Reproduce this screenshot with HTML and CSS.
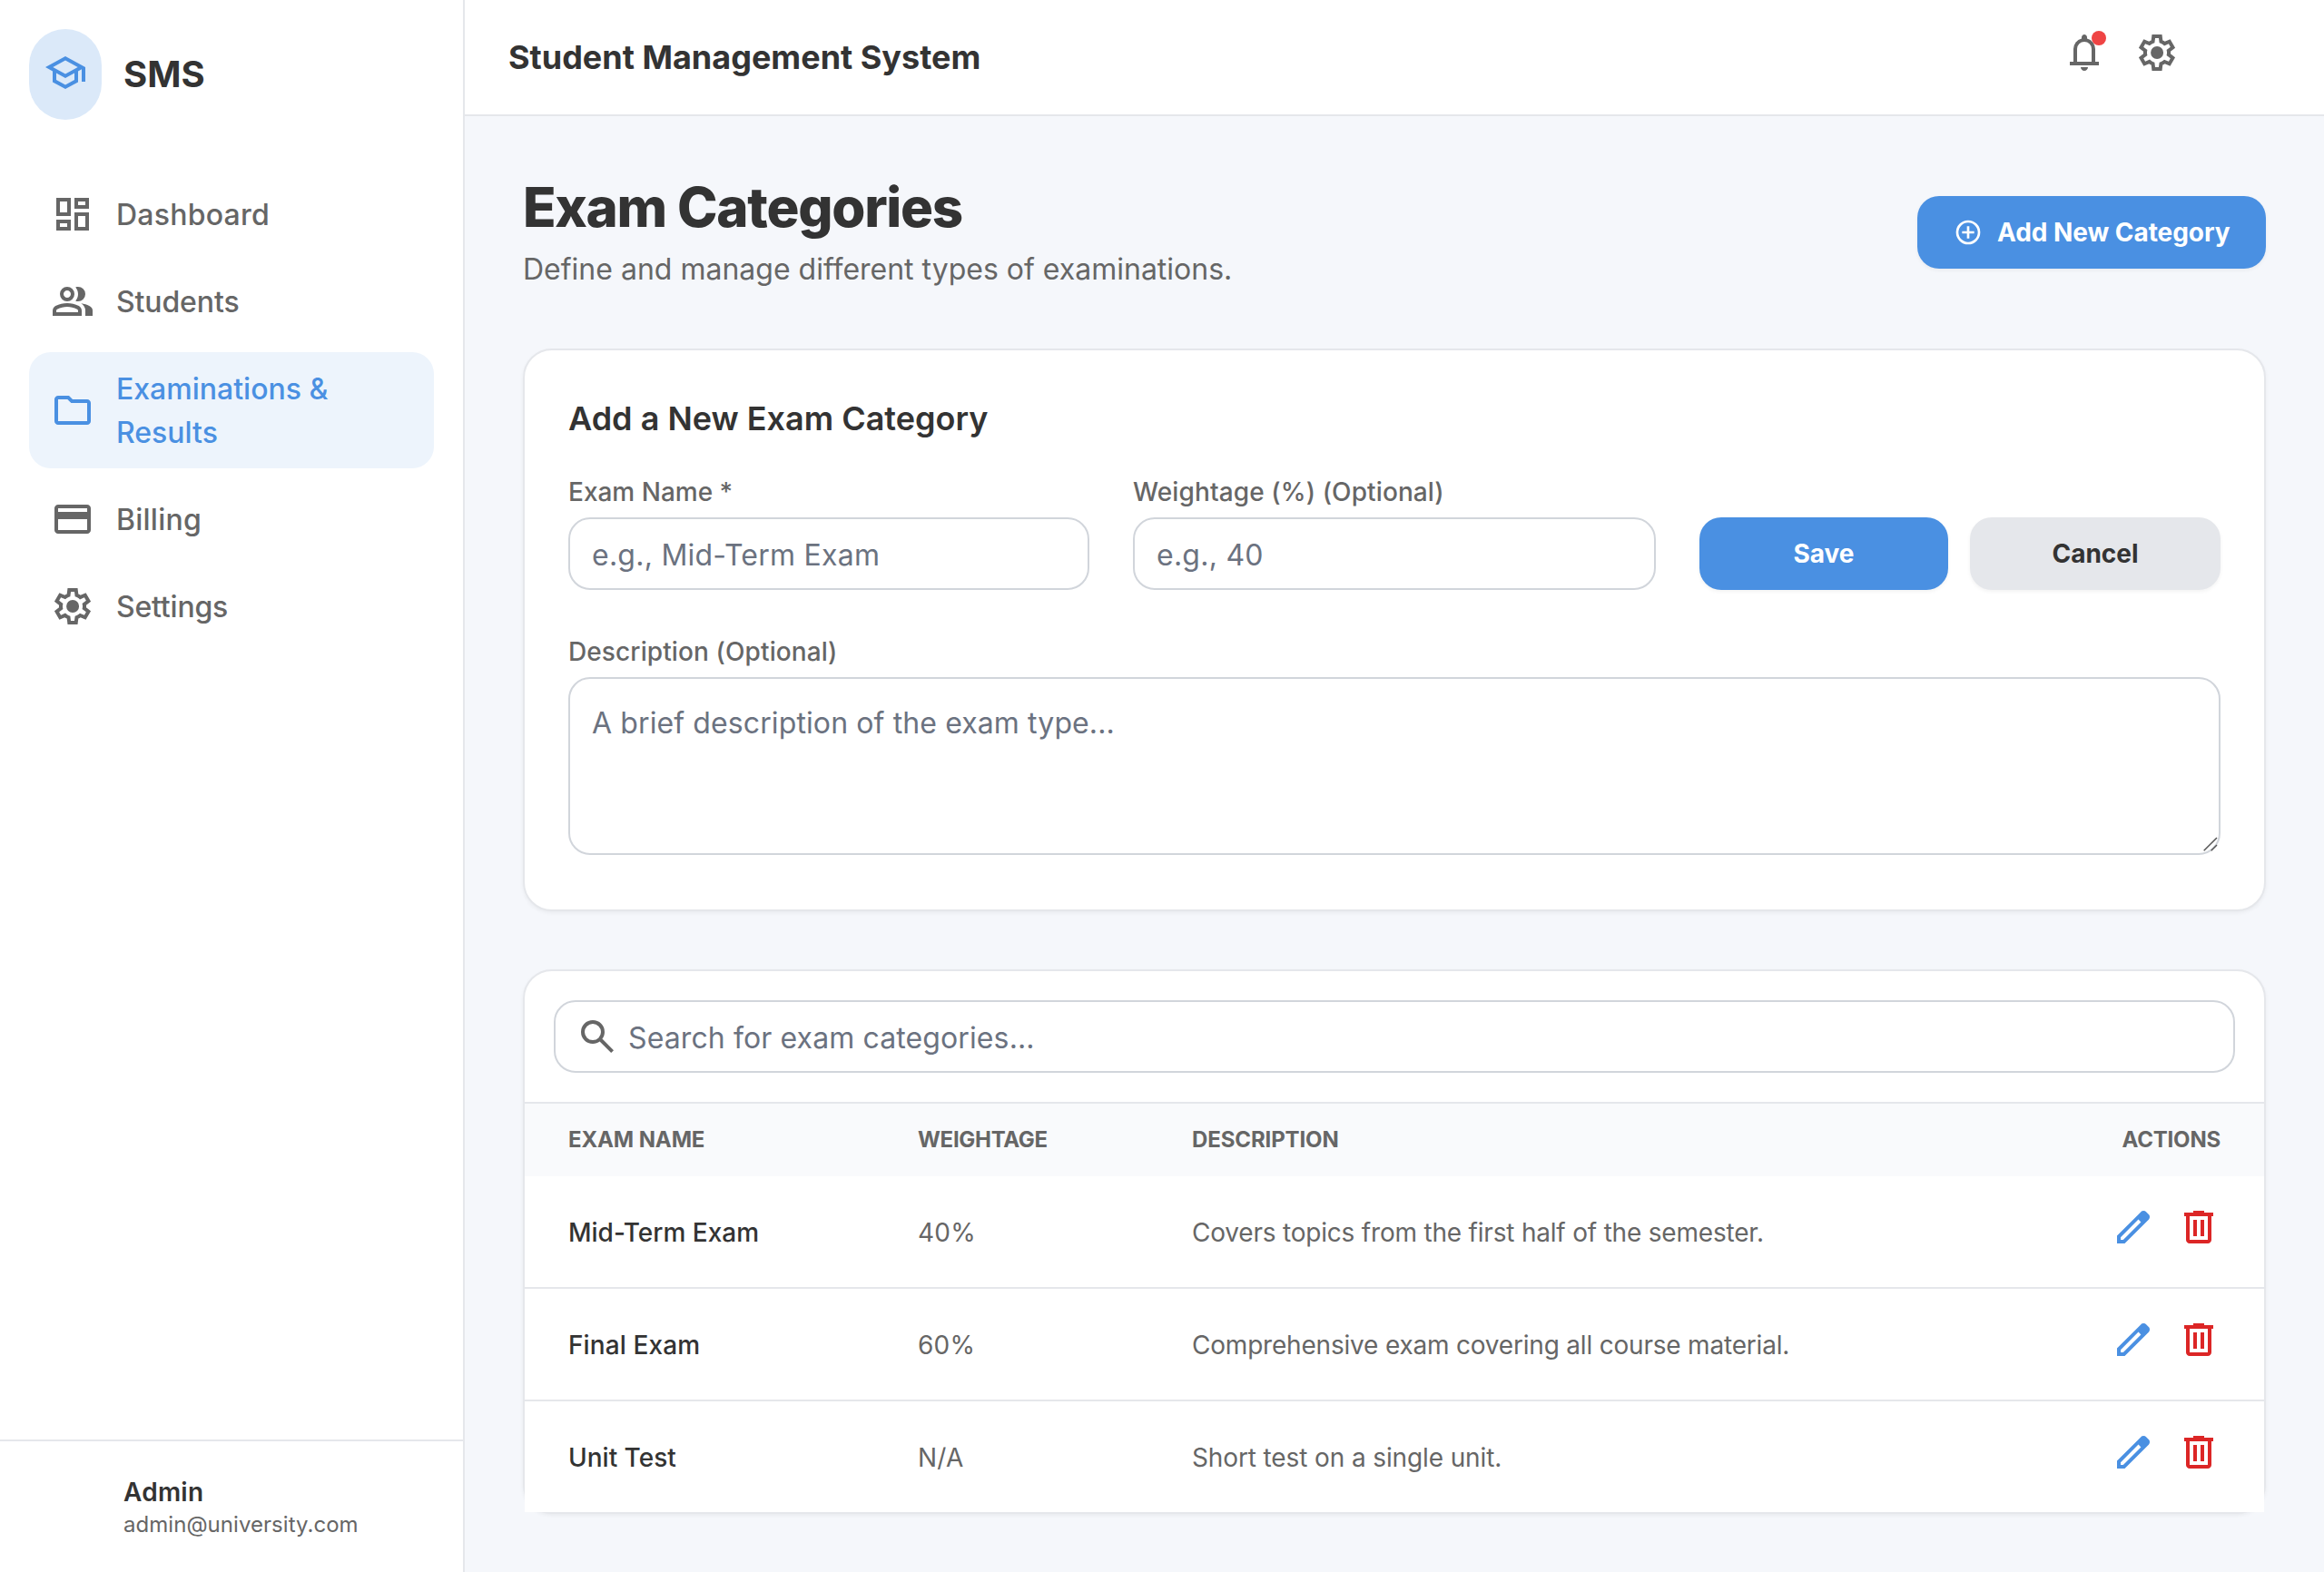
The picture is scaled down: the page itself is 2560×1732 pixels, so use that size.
FILE: index.html
```html
<!DOCTYPE html>
<html lang="en">
<head>
<meta charset="utf-8">
<title>Student Management System</title>
<link rel="stylesheet" href="styles.css">
</head>
<body>
<svg class="sprite" width="0" height="0" aria-hidden="true">
  <symbol id="i-school" viewBox="0 0 24 24"><path d="M12 21l-7-3.8v-6L1 9l11-6 11 6v8h-2v-6.9l-2 1.1v6zm0-8.3L18.85 9 12 5.3 5.15 9zm0 6.025 5-2.7V12.25L12 15l-5-2.75v3.775z"/></symbol>
  <symbol id="i-dashboard" viewBox="0 0 24 24"><path fill-rule="evenodd" d="M13 9V3h8v6zM3 13V3h8v10zm10 8V11h8v10zM3 21v-6h8v6zm2-10h4V5H5zm10 8h4v-6h-4zm0-12h4V5h-4zM5 19h4v-2H5z"/></symbol>
  <symbol id="i-group" viewBox="0 0 24 24"><path fill-rule="evenodd" d="M1 20v-2.8q0-.85.438-1.562T2.6 14.55q1.55-.775 3.15-1.162T9 13t3.25.388t3.15 1.162q.725.375 1.163 1.088T17 17.2V20zm18 0v-3q0-1.1-.612-2.113T16.65 13.15q1.275.15 2.4.513t2.1.887q.9.5 1.375 1.112T23 17v3zM9 12q-1.65 0-2.825-1.175T5 8t1.175-2.825T9 4t2.825 1.175T13 8t-1.175 2.825T9 12m10-4q0 1.65-1.175 2.825T15 12q-.275 0-.7-.062t-.7-.138q.675-.8 1.038-1.775T15 8t-.362-2.025T13.6 4.2q.35-.125.7-.163T15 4q1.65 0 2.825 1.175T19 8M3 18h12v-.8q0-.275-.137-.5t-.363-.35q-1.35-.675-2.725-1.012T9 15t-2.775.338T3.5 16.35q-.225.125-.363.35T3 17.2zm6-8q.825 0 1.413-.587T11 8t-.587-1.412T9 6t-1.412.588T7 8t.588 1.413T9 10"/></symbol>
  <symbol id="i-folder" viewBox="0 0 24 24"><path fill-rule="evenodd" d="M4 20q-.825 0-1.412-.587T2 18V6q0-.825.588-1.412T4 4h6l2 2h8q.825 0 1.413.588T22 8v10q0 .825-.587 1.413T20 20zm0-2h16V8h-8.825l-2-2H4z"/></symbol>
  <symbol id="i-card" viewBox="0 0 24 24"><path fill-rule="evenodd" d="M22 6v12q0 .825-.587 1.413T20 20H4q-.825 0-1.412-.587T2 18V6q0-.825.588-1.412T4 4h16q.825 0 1.413.588T22 6M4 8h16V6H4zm0 4v6h16v-6z"/></symbol>
  <symbol id="i-settings" viewBox="0 0 24 24"><path fill-rule="evenodd" d="m9.25 22-.4-3.2q-.325-.125-.612-.3-.288-.175-.563-.375L4.7 19.375l-2.75-4.75 2.575-1.95Q4.5 12.5 4.5 12.337v-.675q0-.162.025-.337L1.95 9.375l2.75-4.75 2.975 1.25q.275-.2.575-.375.3-.175.6-.3l.4-3.2h5.5l.4 3.2q.325.125.613.3.287.175.562.375l2.975-1.25 2.75 4.75-2.575 1.95q.025.175.025.337v.675q0 .163-.05.338l2.575 1.95-2.75 4.75-2.95-1.25q-.275.2-.575.375-.3.175-.6.3l-.4 3.2Zm2.8-6.5q1.45 0 2.475-1.025Q15.55 13.45 15.55 12q0-1.45-1.025-2.475Q13.5 8.5 12.05 8.5q-1.475 0-2.488 1.025Q8.55 10.55 8.55 12q0 1.45 1.012 2.475Q10.575 15.5 12.05 15.5ZM11 20h1.975l.35-2.65q.775-.2 1.438-.588.662-.387 1.212-.937l2.475 1.025.975-1.7-2.15-1.625q.125-.35.175-.738.05-.387.05-.787t-.05-.788q-.05-.387-.175-.737l2.15-1.625-.975-1.7-2.475 1.05q-.55-.575-1.212-.963-.663-.387-1.438-.587L13 4h-1.975l-.35 2.65q-.775.2-1.437.587-.663.388-1.213.938L5.55 7.15l-.975 1.7 2.15 1.6q-.125.375-.175.75-.05.375-.05.8 0 .4.05.775.05.375.175.75l-2.15 1.625.975 1.7 2.475-1.05q.55.575 1.213.962.662.388 1.437.588Z"/></symbol>
  <symbol id="i-bell" viewBox="0 0 24 24"><path fill-rule="evenodd" d="M4 19v-2h2v-7q0-2.075 1.25-3.687T10.5 4.2v-.7q0-.625.438-1.062T12 2t1.063.438T13.5 3.5v.7q2 .5 3.25 2.113T18 10v7h2v2zm8 3q-.825 0-1.412-.587T10 20h4q0 .825-.587 1.413T12 22m-4-5h8v-7q0-1.65-1.175-2.825T12 6T9.175 7.175T8 10z"/></symbol>
  <symbol id="i-add" viewBox="0 0 24 24"><path d="M11 17h2v-4h4v-2h-4V7h-2v4H7v2h4z"/><circle cx="12" cy="12" r="9" fill="none" stroke="currentColor" stroke-width="2"/></symbol>
  <symbol id="i-search" viewBox="0 0 24 24"><path fill-rule="evenodd" d="m19.6 21l-6.3-6.3q-.75.6-1.725.95T9.5 16q-2.725 0-4.612-1.888T3 9.5t1.888-4.612T9.5 3t4.613 1.888T16 9.5q0 1.1-.35 2.075T14.7 13.3l6.3 6.3zM9.5 14q1.875 0 3.188-1.312T14 9.5t-1.312-3.187T9.5 5 6.313 6.313 5 9.5t1.313 3.188T9.5 14"/></symbol>
  <symbol id="i-edit" viewBox="0 0 24 24"><path d="M5 19h1.425L16.2 9.225L14.775 7.8L5 17.575zm-2 2v-4.25L16.2 3.575q.3-.275.663-.425t.762-.15t.775.15t.65.45L20.425 5q.3.275.438.65T21 6.4q0 .4-.137.763t-.438.662L7.25 21z"/></symbol>
  <symbol id="i-delete" viewBox="0 0 24 24"><path fill-rule="evenodd" d="M7 21q-.825 0-1.412-.587T5 19V6H4V4h5V3h6v1h5v2h-1v13q0 .825-.587 1.413T17 21zM17 6H7v13h10zM9 17h2V8H9zm4 0h2V8h-2z"/></symbol>
</svg>

<div class="app">
  <aside class="sidebar">
    <div class="brand">
      <span class="brand-mark"><svg class="icon"><use href="#i-school"/></svg></span>
      <span class="brand-name">SMS</span>
    </div>
    <nav class="nav">
      <a class="nav-item track-2"><svg class="icon"><use href="#i-dashboard"/></svg><span>Dashboard</span></a>
      <a class="nav-item track-n1"><svg class="icon"><use href="#i-group"/></svg><span>Students</span></a>
      <a class="nav-item active"><svg class="icon"><use href="#i-folder"/></svg><span>Examinations &amp; Results</span></a>
      <a class="nav-item track-2"><svg class="icon"><use href="#i-card"/></svg><span>Billing</span></a>
      <a class="nav-item track-n2"><svg class="icon"><use href="#i-settings"/></svg><span>Settings</span></a>
    </nav>
    <div class="account">
      <span class="avatar"></span>
      <div class="account-text">
        <p class="account-name track-2">Admin</p>
        <p class="account-mail">admin@university.com</p>
      </div>
    </div>
  </aside>

  <div class="page">
    <header class="topbar">
      <h2 class="topbar-title">Student Management System</h2>
      <div class="topbar-tools">
        <span class="tool"><svg class="icon"><use href="#i-bell"/></svg><span class="dot"></span></span>
        <span class="tool"><svg class="icon"><use href="#i-settings"/></svg></span>
        <span class="avatar"></span>
      </div>
    </header>

    <main class="main">
      <section class="heading">
        <div class="heading-text">
          <h1 class="title">Exam Categories</h1>
          <p class="subtitle">Define and manage different types of examinations.</p>
        </div>
        <button class="btn btn-primary btn-add"><svg class="icon-sm"><use href="#i-add"/></svg><span>Add New Category</span></button>
      </section>

      <section class="card form-card">
        <h3 class="card-title">Add a New Exam Category</h3>
        <div class="form-grid">
          <div class="field">
            <label class="label" for="name">Exam Name *</label>
            <input class="input track-2" id="name" type="text" placeholder="e.g., Mid-Term Exam">
          </div>
          <div class="field">
            <label class="label track-1" for="weight">Weightage (%) (Optional)</label>
            <input class="input track-2" id="weight" type="text" placeholder="e.g., 40">
          </div>
          <div class="form-actions">
            <button class="btn btn-primary">Save</button>
            <button class="btn btn-muted">Cancel</button>
          </div>
          <div class="field field-wide">
            <label class="label track-1" for="desc">Description (Optional)</label>
            <div class="area-wrap">
              <textarea class="input area track-1" id="desc" rows="3" placeholder="A brief description of the exam type..."></textarea>
              <svg class="grip" viewBox="0 0 16 16"><path d="M.7 15.3 15 1M8.7 15.3 15 9"/></svg>
            </div>
          </div>
        </div>
      </section>

      <section class="card">
        <div class="search">
          <svg class="icon search-icon"><use href="#i-search"/></svg>
          <input class="input search-input track-1" type="text" placeholder="Search for exam categories...">
        </div>
        <table class="table">
          <colgroup><col class="c-name"><col class="c-weight"><col><col class="c-actions"></colgroup>
          <thead>
            <tr><th class="track-n1">Exam Name</th><th class="track-n3">Weightage</th><th class="track-n1">Description</th><th class="right track-n2">Actions</th></tr>
          </thead>
          <tbody>
            <tr>
              <td class="strong">Mid-Term Exam</td><td class="track-2">40%</td><td class="track-n2">Covers topics from the first half of the semester.</td>
              <td><div class="actions"><svg class="icon edit"><use href="#i-edit"/></svg><svg class="icon delete"><use href="#i-delete"/></svg></div></td>
            </tr>
            <tr>
              <td class="strong track-1">Final Exam</td><td class="track-2">60%</td><td class="track-n2">Comprehensive exam covering all course material.</td>
              <td><div class="actions"><svg class="icon edit"><use href="#i-edit"/></svg><svg class="icon delete"><use href="#i-delete"/></svg></div></td>
            </tr>
            <tr>
              <td class="strong">Unit Test</td><td class="track-2">N/A</td><td class="track-n1">Short test on a single unit.</td>
              <td><div class="actions"><svg class="icon edit"><use href="#i-edit"/></svg><svg class="icon delete"><use href="#i-delete"/></svg></div></td>
            </tr>
          </tbody>
        </table>
      </section>
    </main>
  </div>
</div>
</body>
</html>
```
FILE: styles.css
```css
:root {
  --primary: #4a90e2;
  --text: #333;
  --muted: #666;
  --line: #e5e7eb;
  --field-line: #d1d5db;
  --bg: #f5f7fb;
}

* { box-sizing: border-box; margin: 0; padding: 0; }

body {
  font-family: Inter, "Liberation Sans", sans-serif;
  font-size: 32px;
  line-height: 48px;
  color: var(--text);
  background: var(--bg);
}

button, input, textarea { font: inherit; color: inherit; }

.sprite { position: absolute; }
.icon { display: block; flex: none; width: 48px; height: 48px; fill: currentColor; }
.icon-sm { display: block; flex: none; width: 32px; height: 32px; fill: currentColor; }
.avatar { flex: none; width: 80px; height: 80px; border-radius: 50%; }

.app { display: flex; height: 1732px; }

/* Sidebar */
.sidebar {
  display: flex;
  flex-direction: column;
  flex: none;
  width: 512px;
  background: #fff;
  border-right: 2px solid var(--line);
}
.brand { display: flex; align-items: center; gap: 24px; padding: 32px; }
.brand-mark {
  width: 80px;
  height: 100px;
  padding: 24px 16px;
  border-radius: 40px;
  color: var(--primary);
  background: #dbe9f9;
}
.brand-name { font-size: 40px; line-height: 56px; font-weight: 700; }
.nav { display: flex; flex-direction: column; flex: 1; gap: 16px; padding: 32px; }
.nav-item {
  display: flex;
  align-items: center;
  gap: 24px;
  padding: 17px 24px 15px;
  border-radius: 24px;
  font-weight: 500;
  color: var(--muted);
}
.nav-item .icon { margin-top: -2px; }
.nav-item.active { color: var(--primary); background: #edf4fc; }
.account { display: flex; align-items: center; gap: 24px; padding: 32px; border-top: 2px solid var(--line); }
.account-name { font-size: 28px; line-height: 40px; font-weight: 600; }
.account-mail { font-size: 24px; line-height: 32px; letter-spacing: .04px; color: var(--muted); }

/* Top bar */
.page { flex: 1; min-width: 0; }
.topbar {
  display: flex;
  align-items: center;
  justify-content: space-between;
  height: 128px;
  padding: 0 48px;
  background: #fff;
  border-bottom: 2px solid var(--line);
}
.topbar-title { font-size: 36px; line-height: 56px; font-weight: 700; }
.topbar-tools { display: flex; align-items: center; gap: 32px; color: var(--muted); }
.tool { position: relative; padding-bottom: 10px; }
.dot { position: absolute; top: 0; right: 0; width: 16px; height: 16px; border-radius: 50%; background: #ef4444; }

/* Main column */
.main { display: flex; flex-direction: column; gap: 64px; padding: 64px; }
.heading { display: flex; align-items: center; justify-content: space-between; height: 128px; }
.heading-text { display: flex; flex-direction: column; gap: 9px; height: 128px; }
.title { font-size: 60px; line-height: 72px; font-weight: 800; letter-spacing: -1.25px; }
.subtitle { color: var(--muted); }

.btn {
  display: flex;
  align-items: center;
  justify-content: center;
  gap: 16px;
  height: 80px;
  border: 0;
  border-radius: 24px;
  font-size: 28px;
  line-height: 40px;
  font-weight: 700;
  box-shadow: 0 2px 4px rgba(0, 0, 0, .05);
}
.btn-add { width: 384px; justify-content: flex-start; padding: 0 40px; white-space: nowrap; letter-spacing: -.06px; }
.btn-primary { color: #fff; background: var(--primary); }
.btn-muted { color: var(--text); background: var(--line); }

.card { background: #fff; border: 2px solid var(--line); border-radius: 32px; box-shadow: 0 2px 4px rgba(0, 0, 0, .05); }

/* Form */
.form-card { padding: 47px 48px 60px; }
.card-title { margin-bottom: 33px; font-size: 36px; line-height: 56px; font-weight: 600; }
.form-grid { display: grid; grid-template-columns: 574px 576px 574px; gap: 48px; align-items: end; }
.field { display: flex; flex-direction: column; gap: 8px; min-width: 0; }
.field-wide { grid-column: 1 / -1; }
.label { font-size: 28px; line-height: 40px; font-weight: 500; color: var(--muted); }
.input {
  display: block;
  width: 100%;
  height: 80px;
  padding: 2px 24px 0;
  border: 2px solid var(--field-line);
  border-radius: 24px;
  background: #fff;
  outline: none;
}
.input::placeholder { color: #6b7280; opacity: 1; }
.area-wrap { position: relative; }
.area { height: 196px; padding: 25px 24px 23px; resize: none; }
.grip { position: absolute; right: 3px; bottom: 4px; width: 16px; height: 16px; fill: none; stroke: #555; stroke-width: 1.5; }
.form-actions { display: grid; grid-template-columns: 274px 276px; gap: 24px; }

/* Table */
.search { position: relative; padding: 32px; border-bottom: 2px solid var(--line); }
.search-icon { position: absolute; top: 48px; left: 56px; color: var(--muted); }
.search-input { padding-left: 80px; }
.table { width: 100%; table-layout: fixed; border-collapse: separate; border-spacing: 0; font-size: 28px; line-height: 40px; }
.c-name { width: 385px; }
.c-weight { width: 302px; }
.c-actions { width: 300px; }
.table th {
  height: 80px;
  padding: 0 48px;
  text-align: left;
  font-size: 24px;
  line-height: 32px;
  font-weight: 700;
  text-transform: uppercase;
  color: var(--muted);
  background: #f9fafc;
}
.table th.right { text-align: right; }
.table td { height: 124px; padding: 2px 48px 0; color: var(--muted); background: #fff; border-bottom: 2px solid var(--line); white-space: nowrap; }
.table tr:last-child td { height: 122px; border-bottom: 0; }
.table td.strong { font-weight: 500; color: var(--text); }
.actions { display: flex; justify-content: flex-end; gap: 24px; padding-bottom: 12px; }
.edit { color: var(--primary); }
.delete { color: #dc2626; }

/* Fine tracking */
.track-2 { letter-spacing: .24px; }
.track-1 { letter-spacing: .11px; }
.track-n1 { letter-spacing: -.12px; }
.track-n2 { letter-spacing: -.2px; }
.track-n3 { letter-spacing: -.3px; }
```
